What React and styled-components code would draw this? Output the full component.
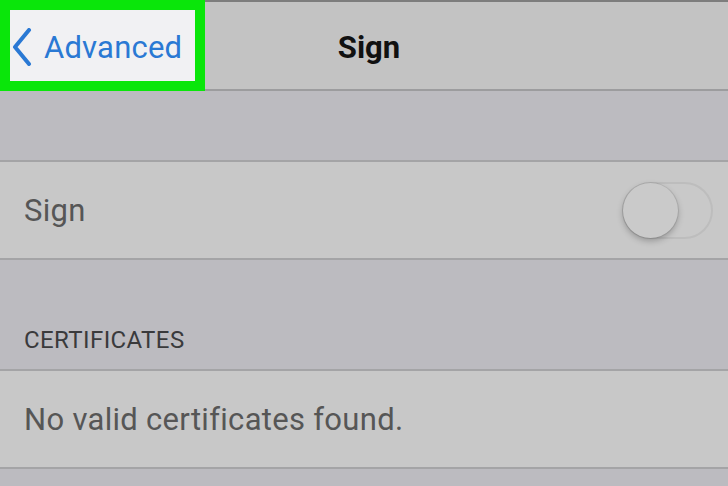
import React from 'react';
import styled, { createGlobalStyle } from 'styled-components';

const Global = createGlobalStyle`
  html, body {
    margin: 0;
    padding: 0;
    background: #bcbbc0;
  }
  body {
    font-family: Roboto, "Noto Sans", sans-serif;
  }
`;

const Screen = styled.div`
  width: 728px;
  height: 486px;
  overflow: hidden;
  background: #bcbbc0;
  display: flex;
  flex-direction: column;
`;

const NavBar = styled.header`
  height: 91px;
  box-sizing: border-box;
  display: grid;
  grid-template-columns: 205px 1fr 205px;
  align-items: center;
  background: #c3c3c3;
  border-top: 2px solid #7d7d7d;
  border-bottom: 2px solid #9c9c9e;
`;

const BackButton = styled.button`
  align-self: stretch;
  margin: -2px 0 -2px 0;
  box-sizing: border-box;
  display: flex;
  align-items: center;
  gap: 12px;
  padding: 3px 0 0 2px;
  background: #f1f1f3;
  border: 10px solid #0ae60a;
  color: #2a79d4;
  font-family: inherit;
  font-size: 31px;
  letter-spacing: 0.2px;
  cursor: pointer;
  svg {
    flex: none;
  }
`;

const Title = styled.h1`
  margin: 4px 0 0 10px;
  text-align: center;
  font-size: 31px;
  font-weight: 700;
  color: #111;
`;

const Gap = styled.div`
  height: ${p => p.$h}px;
  flex: none;
  box-sizing: border-box;
  display: flex;
  align-items: flex-end;
  padding: 0 24px 15px;
`;

const SectionLabel = styled.span`
  font-size: 24px;
  color: #3a3a3c;
  letter-spacing: 0.4px;
`;

const Row = styled.div`
  height: ${p => p.$h}px;
  flex: none;
  box-sizing: border-box;
  display: flex;
  align-items: center;
  justify-content: space-between;
  padding: 0 15px 0 24px;
  background: #c8c8c8;
  border-top: 2px solid #a4a4a6;
  border-bottom: 2px solid #a4a4a6;
`;

const RowText = styled.span`
  font-size: 31px;
  color: #565656;
  letter-spacing: 0.3px;
`;

const Switch = styled.div`
  width: 91px;
  height: 57px;
  box-sizing: border-box;
  border-radius: 29px;
  border: 2px solid #bdbdbd;
  background: #c9c9c9;
  position: relative;
`;

const Knob = styled.div`
  position: absolute;
  left: -1px;
  top: -1px;
  width: 55px;
  height: 55px;
  border-radius: 50%;
  background: #cacaca;
  box-shadow: 0 3px 6px rgba(0, 0, 0, 0.25), 0 0 0 1px rgba(0, 0, 0, 0.08);
`;

function Chevron() {
  return (
    <svg width="20" height="38" viewBox="0 0 20 38">
      <path d="M17 2 L3 19 L17 36" fill="none" stroke="#2a79d4" strokeWidth="4" strokeLinecap="round" strokeLinejoin="round" />
    </svg>
  );
}

export default function App() {
  return (
    <Screen>
      <Global />
      <NavBar>
        <BackButton>
          <Chevron />
          Advanced
        </BackButton>
        <Title>Sign</Title>
        <div />
      </NavBar>
      <Gap $h={69} />
      <Row $h={100}>
        <RowText>Sign</RowText>
        <Switch>
          <Knob />
        </Switch>
      </Row>
      <Gap $h={109}>
        <SectionLabel>CERTIFICATES</SectionLabel>
      </Gap>
      <Row $h={100}>
        <RowText>No valid certificates found.</RowText>
      </Row>
    </Screen>
  );
}
